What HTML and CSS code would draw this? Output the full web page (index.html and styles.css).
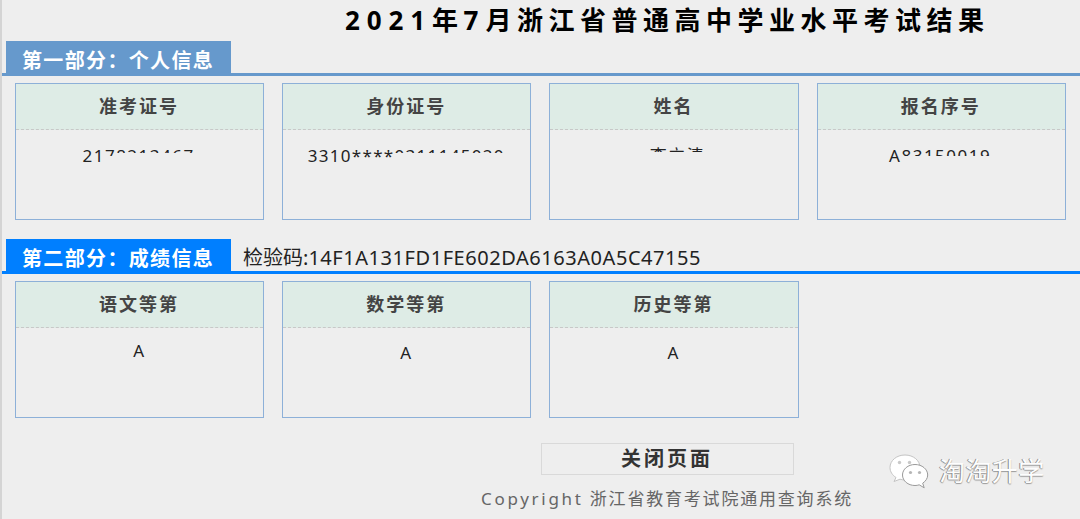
FILE: index.html
```html
<!DOCTYPE html>
<html lang="zh-CN">
<head>
<meta charset="utf-8">
<title>2021年7月浙江省普通高中学业水平考试结果</title>
<link rel="stylesheet" href="styles.css">
</head>
<body>
<div class="page">
  <h1 class="title"><span class="num">2021</span>年<span class="num">7</span>月浙江省普通高中学业水平考试结果</h1>

  <section class="section section-info">
    <div class="section-head">
      <div class="tab">第一部分：个人信息</div>
    </div>
    <div class="cards">
      <div class="card">
        <div class="card-head">准考证号</div>
        <div class="card-body"><span>21</span><span class="cut cut-low">7</span><span class="cut">8213467</span></div>
      </div>
      <div class="card">
        <div class="card-head">身份证号</div>
        <div class="card-body card-body-id"><span>3310****</span><span class="cut">0311145020</span></div>
      </div>
      <div class="card">
        <div class="card-head">姓名</div>
        <div class="card-body card-body-name"><span class="strut"></span><span class="cut cut-name">李立清</span></div>
      </div>
      <div class="card">
        <div class="card-head">报名序号</div>
        <div class="card-body"><span>A</span><span class="cut cut-low">83150019</span></div>
      </div>
    </div>
  </section>

  <section class="section section-score">
    <div class="section-head">
      <div class="tab">第二部分：成绩信息</div>
      <div class="code">检验码:<span class="code-value">14F1A131FD1FE602DA6163A0A5C47155</span></div>
    </div>
    <div class="cards">
      <div class="card">
        <div class="card-head">语文等第</div>
        <div class="card-body card-body-first">A</div>
      </div>
      <div class="card">
        <div class="card-head">数学等第</div>
        <div class="card-body card-body-grade">A</div>
      </div>
      <div class="card">
        <div class="card-head">历史等第</div>
        <div class="card-body card-body-grade">A</div>
      </div>
    </div>
  </section>

  <div class="actions">
    <div class="close-btn">关闭页面</div>
    <div class="copyright"><span class="copyright-latin">Copyright</span> 浙江省教育考试院通用查询系统</div>
  </div>
</div>

<div class="watermark">
  <svg class="wechat" width="42" height="38" viewBox="0 0 42 38" aria-hidden="true">
    <path d="M17 3C8.500 3 2 8.600 2 15.500c0 4.200 2.400 7.700 6 10l-2 4 6-2.300c1.600.5 3.300.8 5 .8 8.500 0 15-5.600 15-12.500S25.500 3 17 3z" fill="#fff" stroke="#c4c4c4" stroke-width="1"/>
    <path d="M27 12.500c-7 0-12.500 4.700-12.500 10.500S20 33.500 27 33.500c1.500 0 2.900-.2 4.200-.7l5 3-1.500-4.600c3-2 5-4.900 5-8.200C39.700 17.200 34 12.500 27 12.500z" fill="#fff" stroke="#9a9a9a" stroke-width="1"/>
    <circle cx="11.500" cy="10.500" r="1.700" fill="#c9c9c9"/>
    <circle cx="21.500" cy="10.500" r="1.700" fill="#c9c9c9"/>
    <circle cx="22.500" cy="20.500" r="1.600" fill="#b5b5b5"/>
    <circle cx="31.500" cy="20.500" r="1.600" fill="#b5b5b5"/>
  </svg>
  <span class="wm-text">淘淘升学</span>
</div>
</body>
</html>
```
FILE: styles.css
```css
* { box-sizing: border-box; }
html, body { margin: 0; padding: 0; }
body {
  width: 1080px;
  height: 519px;
  overflow: hidden;
  position: relative;
  background: #eeeeee;
  font-family: "Noto Sans", "Open Sans", "Noto Sans CJK SC", sans-serif;
}
.page {
  height: 519px;
  border-left: 2px solid #d4d4d4;
}
.title {
  margin: 0;
  height: 41px;
  padding-left: 343px;
  font-size: 26px;
  line-height: 40px;
  font-weight: 700;
  letter-spacing: 5.5px;
  color: #000;
  white-space: nowrap;
}
.num { letter-spacing: 6.9px; }
.section-head {
  display: flex;
  align-items: flex-start;
  height: 35px;
  padding-left: 4px;
  border-bottom: 3px solid #6699cc;
}
.section-score { margin-top: 19px; }
.section-score .section-head { border-bottom-color: #007fff; }
.tab {
  width: 225px;
  height: 35px;
  padding-left: 16px;
  background: #6699cc;
  color: #fff;
  font-size: 20px;
  line-height: 40px;
  font-weight: 700;
  letter-spacing: 1.35px;
  white-space: nowrap;
}
.section-score .tab { background: #007fff; }
.code {
  margin-left: 12px;
  font-size: 20px;
  line-height: 38px;
  color: #222;
  white-space: nowrap;
}
.code-value { letter-spacing: 0.55px; }
.cards {
  display: flex;
  gap: 18px;
  padding: 7px 0 0 13px;
}
.card {
  width: 249.2px;
  height: 137px;
  border: 1px solid #8db0d8;
}
.card-head {
  height: 46px;
  padding-right: 1px;
  background: #deece6;
  border-bottom: 1px dashed #c8c8c8;
  text-align: center;
  font-size: 18px;
  line-height: 45px;
  font-weight: 700;
  letter-spacing: 2px;
  color: #444;
}
.card-body {
  padding-top: 15px;
  padding-right: 2px;
  text-align: center;
  font-size: 17px;
  line-height: 22px;
  letter-spacing: 1.5px;
  color: #222;
  white-space: nowrap;
}
.card-body-id { letter-spacing: 1.3px; padding-left: 1px; }
.card-body-name { padding-left: 9px; }
.card-body-first { padding-top: 12px; letter-spacing: 0; }
.card-body-grade { padding-top: 14px; letter-spacing: 0; }
.cut {
  display: inline-block;
  height: 8px;
  overflow: hidden;
  vertical-align: top;
}
.cut-low { height: 11px; }
.cut-name { height: 7px; }
.strut { display: inline-block; height: 22px; width: 0; }
.actions {
  display: flex;
  flex-direction: column;
  align-items: center;
  padding: 25px 0 0 252px;
}
.close-btn {
  width: 253px;
  height: 32px;
  border: 1px solid #d9d9d9;
  text-align: center;
  font-size: 20px;
  line-height: 30px;
  font-weight: 700;
  letter-spacing: 3px;
  color: #333;
}
.copyright {
  margin-top: 11px;
  font-size: 17px;
  line-height: 26px;
  letter-spacing: 1.8px;
  color: #666;
  white-space: nowrap;
}
.copyright-latin { letter-spacing: 2.7px; }
.watermark {
  position: absolute;
  left: 888px;
  top: 452px;
  display: flex;
  align-items: center;
  gap: 9px;
}
.wm-text {
  font-size: 26px;
  line-height: 38px;
  letter-spacing: 0.4px;
  color: #fdfdfd;
  text-shadow: -1px 0 0 #8a8a8a, 0 1px 1px #9a9a9a;
  white-space: nowrap;
}
```
